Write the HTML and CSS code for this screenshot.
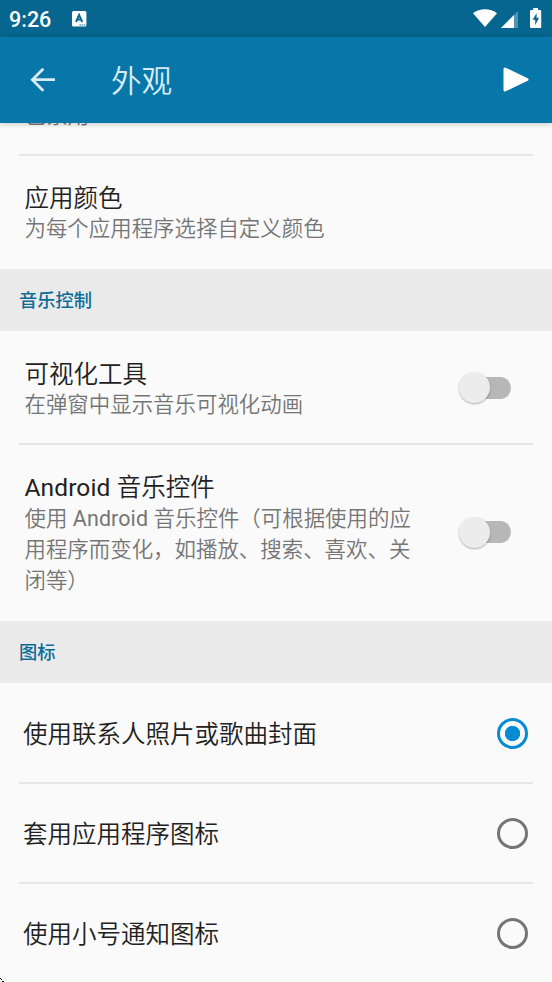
FILE: index.html
```html
<!DOCTYPE html>
<html lang="zh-CN">
<head>
<meta charset="utf-8">
<title>外观</title>
<link rel="stylesheet" href="styles.css">
</head>
<body>
<div class="screen">
  <div class="status-bar">
    <span class="clock">9:26</span>
    <svg class="input-icon" width="15" height="16" viewBox="0 0 15 16">
      <rect width="14.4" height="15.6" rx="1.5" fill="#fff"/>
      <path d="M4 11 7.1 3.8 10.2 11M5 8.6h4.2" fill="none" stroke="#07668f" stroke-width="1.9"/>
      <path d="M7.5 14h1.6M9.9 14h1.4M12.1 14h1.3" stroke="#07668f" stroke-width="1"/>
    </svg>
    <div class="status-icons">
      <svg class="wifi" width="24" height="18" viewBox="0 0 24 18"><path d="M0 4.2C6.500-1.1 17.500-1.1 24 4.200L12 18Z" fill="#fff"/></svg>
      <svg class="signal" width="17" height="17" viewBox="0 0 17 17"><path d="M17 0V17H0Z" fill="#fff" fill-opacity=".3"/><path d="M13 4V17H0Z" fill="#fff"/></svg>
      <svg class="battery" width="12" height="20" viewBox="0 0 12 20"><path d="M3.200 0H8V2H10.200Q11.200 2 11.200 3V19Q11.200 20 10.200 20H1Q0 20 0 19V3Q0 2 1 2H3.200Z" fill="#fff"/><path d="M6.700 4.900 2.600 11.800H5.200V17.300L9 9.800H6.500Z" fill="#07668f"/></svg>
    </div>
  </div>
  <header class="app-bar">
    <svg class="back" width="26" height="26" viewBox="0 0 26 26"><path d="M25 12.700H2.500M13.300 1.700 2.300 12.700 13.300 23.700" fill="none" stroke="#daebf3" stroke-width="2.700"/></svg>
    <h1 class="page-title">外观</h1>
    <svg class="play" width="26" height="26" viewBox="0 0 26 26"><path d="M2 2 24 12.500 2 23Z" fill="#fff" stroke="#fff" stroke-width="3" stroke-linejoin="round"/></svg>
  </header>
  <main class="content">
    <div class="row row-clipped"><p class="summary">已禁用</p></div>
    <div class="divider"></div>
    <div class="row"><div class="text"><p class="title">应用颜色</p><p class="summary">为每个应用程序选择自定义颜色</p></div></div>
    <h2 class="section">音乐控制</h2>
    <div class="row row-visualizer"><div class="text"><p class="title">可视化工具</p><p class="summary">在弹窗中显示音乐可视化动画</p></div><span class="switch"><i class="knob"></i></span></div>
    <div class="divider"></div>
    <div class="row row-media"><div class="text"><p class="title"><span class="latin">Android </span>音乐控件</p><p class="summary">使用<span class="latin"> Android </span>音乐控件（可根据使用的应<br>用程序而变化，如播放、搜索、喜欢、关<br>闭等）</p></div><span class="switch"><i class="knob"></i></span></div>
    <h2 class="section">图标</h2>
    <div class="option option-first"><span class="title">使用联系人照片或歌曲封面</span><span class="radio checked"></span></div>
    <div class="divider"></div>
    <div class="option"><span class="title">套用应用程序图标</span><span class="radio"></span></div>
    <div class="divider"></div>
    <div class="option"><span class="title">使用小号通知图标</span><span class="radio"></span></div>
  </main>
  <svg class="corner" width="4" height="5" viewBox="0 0 4 5"><path d="M0 1h1v1H0zM1 2h1v1H1zM2 4h2v1H2z" fill="#000"/></svg>
</div>
</body>
</html>
```
FILE: styles.css
```css
* { box-sizing: border-box; margin: 0; padding: 0; }
body { background: #fafafa; font-family: Roboto, "Noto Sans CJK SC", sans-serif; }
.screen { position: relative; display: flex; flex-direction: column; width: 552px; height: 982px; overflow: hidden; }
svg { display: block; flex: none; }

.status-bar { display: flex; flex: none; height: 37px; padding: 0 10px 0 9px; background: #07668f; color: #fff; }
.clock { width: 63px; font-size: 21.5px; font-weight: 500; line-height: 39px; }
.input-icon { margin-top: 11px; }
.status-icons { display: flex; margin-left: auto; }
.wifi { margin-top: 9px; }
.signal { margin: 11px 12px 0 4px; }
.battery { margin-top: 8px; }

.app-bar { position: relative; z-index: 1; display: flex; flex: none; align-items: center; height: 86px; padding: 0 23px 0 30px; background: #0776a9; box-shadow: 0 1px 6px rgba(0, 0, 0, .2); }
.page-title { padding-top: 4px; margin-left: 55px; font-size: 30.6px; font-weight: 350; line-height: 44px; color: #daebf3; }
.play { margin-left: auto; }

.content { flex: 1; min-height: 0; overflow: hidden; }
.row { display: flex; align-items: center; padding: 27px 40px 25px 24.500px; }
.row-clipped { margin-top: -23px; padding: 0 25px 23px; }
.row-visualizer { padding-top: 28px; padding-bottom: 23px; }
.row-media { padding-bottom: 25px; }
.text { flex: 1; }
.title { font-size: 24.500px; font-weight: 350; line-height: 31px; color: #212121; white-space: nowrap; }
.row .title { margin-bottom: -1px; }
.row-media .title { margin-bottom: 0; }
.latin { font-weight: 400; letter-spacing: .12px; }
.summary { font-size: 21.450px; font-weight: 350; line-height: 31px; color: #757575; white-space: nowrap; }
.divider { height: 2px; margin: 0 19px; background: #e6e6e6; }
.section { height: 62px; padding: 1px 0 0 19px; background: #eaeaea; color: #0b6c97; font-size: 18.300px; font-weight: 500; line-height: 62px; }

.switch { display: flex; align-items: center; width: 48px; height: 22px; margin: 0 1px 4px 0; border-radius: 11px; background: linear-gradient(90deg, transparent 16px, #b7b7b7 16px); }
.knob { width: 31px; height: 31px; margin-left: -4px; border-radius: 50%; background: #ececec; box-shadow: 0 1px 2px rgba(0, 0, 0, .3); }

.option { display: flex; align-items: center; justify-content: space-between; height: 98px; padding: 0 24.500px 0 23px; }
.option-first { height: 99px; padding-top: 2px; }
.option .title { padding-top: 2px; }
.option-first .title { padding-top: 1px; }
.radio { width: 31px; height: 31px; border: 3px solid #757575; border-radius: 50%; }
.radio.checked { border-color: #078bd2; background: radial-gradient(circle, #078bd2 7.300px, transparent 8px); }

.corner { position: absolute; left: 0; bottom: 0; }
```
